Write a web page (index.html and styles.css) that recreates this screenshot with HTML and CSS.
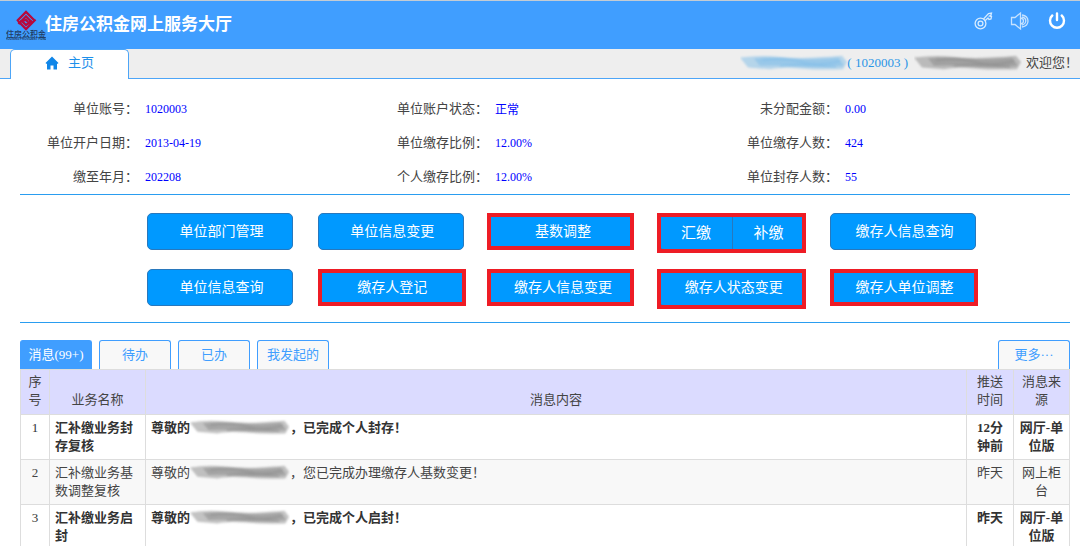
FILE: index.html
```html
<!DOCTYPE html>
<html lang="zh-CN">
<head>
<meta charset="utf-8">
<title>住房公积金网上服务大厅</title>
<link rel="stylesheet" href="styles.css">
</head>
<body>
<svg class="defs" width="0" height="0" aria-hidden="true">
  <defs>
    <filter id="soft" x="-10%" y="-30%" width="120%" height="160%"><feGaussianBlur stdDeviation="1.2"/></filter>
    <symbol id="smudge" viewBox="0 0 108 20" preserveAspectRatio="none">
      <g filter="url(#soft)" fill="currentColor">
        <path opacity=".5" d="M0 4 Q20 1 38 3 T74 4 T102 2 L107 9 L103 17 Q80 18 60 16 T30 17 L8 15 Z"/>
        <path opacity=".5" d="M14 5 Q34 3 52 5 T98 4 L104 13 Q80 16 60 14 T20 13 Z"/>
      </g>
      <g filter="url(#soft)" fill="none" stroke="currentColor" stroke-width="2" opacity=".5">
        <path d="M22 7 Q45 4 62 9 T100 8M40 13 Q60 10 96 14"/>
      </g>
    </symbol>
  </defs>
</svg>

<header class="header">
  <div class="brand">
    <svg class="brand-logo" viewBox="0 0 40 32" role="img" aria-label="住房公积金">
      <g fill="none" stroke="#b8083c" stroke-width="2.300">
        <path d="M11 12 L20 3 L28 11"/>
        <path d="M12.500 15 L20 7.500 L24.500 12 L22.500 14"/>
        <path d="M29.500 10.500 L20 20 L12 12"/>
        <path d="M26 12 L20 16 L16 12 L20 11 L22 13"/>
      </g>
      <text class="logo-name" x="20" y="28" text-anchor="middle">住房公积金</text>
      <text class="logo-sub" x="20" y="31" text-anchor="middle">HOUSING PROVIDENT FUND</text>
    </svg>
    <h1 class="brand-title">住房公积金网上服务大厅</h1>
  </div>
  <div class="tools">
    <button class="tool" type="button" aria-label="修改密码">
      <svg viewBox="0 0 20 20" fill="none" stroke="#d6ebff" stroke-width="1.300">
        <circle cx="7.500" cy="12.500" r="5.400"/><circle cx="7.500" cy="12.500" r="2.400"/>
        <path d="M10.500 8 L15.500 2.500 L18.500 2 L18 4 L16.500 5 L18.500 5.500 L18 8 L16 8.500 L15 7 L12 9.800"/>
      </svg>
    </button>
    <button class="tool" type="button" aria-label="声音">
      <svg viewBox="0 0 20 20" fill="none" stroke="#c6e2ff" stroke-width="1.300">
        <path d="M1.500 6.500 H5 L10.500 2 V18 L5 13.500 H1.500 Z"/>
        <path d="M10.500 7 Q13.500 7.500 13.500 10 T10.500 13"/><path d="M12 4 Q18 5 18 10 T12 16"/><path d="M12 6 Q16 7 15.800 10 T12 14"/>
      </svg>
    </button>
    <button class="tool" type="button" aria-label="退出">
      <svg viewBox="0 0 20 20" fill="none" stroke="#fff" stroke-width="2.400" stroke-linecap="round">
        <path d="M10 2.500 V9M5.300 4.500 A7 7 0 1 0 14.700 4.500"/>
      </svg>
    </button>
  </div>
</header>

<nav class="navbar">
  <a class="home-tab" href="#">
    <svg class="home-icon" viewBox="0 0 14 14" fill="#1086e8"><path d="M7 .5 L13.500 7 L12.800 7.800 H12 V13.500 H8.500 V9.500 H5.500 V13.500 H2 V7.800 H1.200 L.5 7 Z"/></svg>
    <span>主页</span>
  </a>
  <div class="welcome">
    <svg class="smudge smudge-blue" aria-hidden="true"><use href="#smudge"/></svg>
    <span class="unit-id">( 1020003 )</span>
    <svg class="smudge smudge-user" aria-hidden="true"><use href="#smudge"/></svg>
    <span>欢迎您！</span>
  </div>
</nav>

<main class="content">
  <dl class="info">
    <div class="info-item"><dt>单位账号：</dt><dd>1020003</dd></div>
    <div class="info-item"><dt>单位账户状态：</dt><dd class="status">正常</dd></div>
    <div class="info-item"><dt>未分配金额：</dt><dd>0.00</dd></div>
    <div class="info-item"><dt>单位开户日期：</dt><dd>2013-04-19</dd></div>
    <div class="info-item"><dt>单位缴存比例：</dt><dd>12.00%</dd></div>
    <div class="info-item"><dt>单位缴存人数：</dt><dd>424</dd></div>
    <div class="info-item"><dt>缴至年月：</dt><dd>202208</dd></div>
    <div class="info-item"><dt>个人缴存比例：</dt><dd>12.00%</dd></div>
    <div class="info-item"><dt>单位封存人数：</dt><dd>55</dd></div>
  </dl>

  <section class="actions">
    <div class="action"><button type="button">单位部门管理</button></div>
    <div class="action"><button type="button">单位信息变更</button></div>
    <div class="action mark"><button type="button">基数调整</button></div>
    <div class="action split mark mark-tall"><button type="button">汇缴</button><button type="button">补缴</button></div>
    <div class="action"><button type="button">缴存人信息查询</button></div>
    <div class="action"><button type="button">单位信息查询</button></div>
    <div class="action mark mark-right"><button type="button">缴存人登记</button></div>
    <div class="action mark"><button type="button">缴存人信息变更</button></div>
    <div class="action mark mark-tall"><button type="button">缴存人状态变更</button></div>
    <div class="action mark mark-right"><button type="button">缴存人单位调整</button></div>
  </section>

  <section class="messages">
    <div class="tabs">
      <button class="tab tab-active" type="button">消息(99+)</button>
      <button class="tab" type="button">待办</button>
      <button class="tab" type="button">已办</button>
      <button class="tab" type="button">我发起的</button>
      <a class="tab tab-more" href="#">更多···</a>
    </div>
    <table class="list">
      <colgroup><col class="col-no"><col class="col-name"><col><col class="col-time"><col class="col-source"></colgroup>
      <thead>
        <tr><th>序号</th><th>业务名称</th><th>消息内容</th><th>推送时间</th><th>消息来源</th></tr>
      </thead>
      <tbody>
        <tr class="unread">
          <td class="no">1</td><td>汇补缴业务封存复核</td>
          <td>尊敬的<svg class="smudge smudge-row" aria-hidden="true"><use href="#smudge"/></svg>，已完成个人封存！</td>
          <td class="mid">12分钟前</td><td class="mid">网厅-单位版</td>
        </tr>
        <tr class="read">
          <td class="no">2</td><td>汇补缴业务基数调整复核</td>
          <td>尊敬的<svg class="smudge smudge-row" aria-hidden="true"><use href="#smudge"/></svg>，您已完成办理缴存人基数变更！</td>
          <td class="mid">昨天</td><td class="mid">网上柜台</td>
        </tr>
        <tr class="unread">
          <td class="no">3</td><td>汇补缴业务启封</td>
          <td>尊敬的<svg class="smudge smudge-row" aria-hidden="true"><use href="#smudge"/></svg>，已完成个人启封！</td>
          <td class="mid">昨天</td><td class="mid">网厅-单位版</td>
        </tr>
      </tbody>
    </table>
  </section>
</main>
</body>
</html>
```

FILE: styles.css
```css
* {
  box-sizing: border-box;
}

html {
  scrollbar-width: none;
}

body {
  margin: 0;
  background: #fff;
  color: #444;
  font-family: "Liberation Serif", "Noto Sans CJK SC", serif;
  font-size: 13px;
  line-height: 18px;
}

button {
  font-family: inherit;
  cursor: pointer;
}

a {
  text-decoration: none;
}

.defs {
  position: absolute;
}

.header {
  display: flex;
  justify-content: space-between;
  height: 49px;
  padding: 0 13px 0 6px;
  border-top: 1px solid #c4ccd4;
  background: #409eff;
}

.brand {
  display: flex;
  align-items: center;
}

.brand-logo {
  width: 40px;
  height: 32px;
}

.logo-name {
  fill: #1f3a5f;
  font: 500 8px "Noto Sans CJK SC", sans-serif;
}

.logo-sub {
  fill: #1f3a5f;
  font: bold 3px "Liberation Sans", sans-serif;
}

.brand-title {
  margin: 0 0 0 -1px;
  padding-bottom: 4px;
  color: #fff;
  font: bold 17px/24px "Noto Sans CJK SC", sans-serif;
}

.tools {
  display: flex;
  gap: 17px;
  padding-top: 10px;
}

.tool {
  width: 20px;
  height: 20px;
  padding: 0;
  border: 0;
  background: none;
}

.tool svg {
  display: block;
  width: 20px;
  height: 20px;
}

.navbar {
  display: flex;
  justify-content: space-between;
  height: 30px;
  padding-left: 10px;
  border-bottom: 1px solid #4da5f7;
  background: #eee;
}

.home-tab {
  display: flex;
  align-items: center;
  justify-content: center;
  gap: 9px;
  width: 119px;
  height: 30px;
  padding-bottom: 3px;
  border: 1px solid #4da5f7;
  border-bottom: 0;
  border-radius: 5px 5px 0 0;
  background: #fff;
  color: #1e90ea;
}

.home-icon {
  width: 14px;
  height: 14px;
}

.welcome {
  display: flex;
  align-items: center;
  padding: 0 2px 2px 0;
}

.smudge {
  width: 108px;
  height: 18px;
  color: #888;
}

.smudge-blue {
  color: #7dbbe8;
}

.smudge-user {
  margin: 0 4px 0 6px;
}

.unit-id {
  margin-left: -1px;
  color: #2a95e6;
}

.content {
  padding: 13px 10px 0 20px;
}

.info {
  display: grid;
  grid-template-columns: repeat(3, 1fr);
  margin: 0;
  border-bottom: 1px solid #2a9df0;
}

.info-item {
  display: grid;
  grid-template-columns: 118px 1fr;
  gap: 7px;
  line-height: 34px;
}

.info dt {
  text-align: right;
}

.info dd {
  margin: 0;
  color: #00f;
  font-size: 12px;
}

.info .status {
  padding-top: 2px;
  line-height: 32px;
}

.actions {
  display: grid;
  grid-template-columns: repeat(5, 1fr);
  gap: 19px 25px;
  padding: 18px 94px 16px 127px;
  border-bottom: 1px solid #2a9df0;
}

.action {
  position: relative;
  display: flex;
  height: 37px;
}

.action button {
  flex: 1;
  padding: 0 0 3px 3px;
  border: 1px solid #2878bd;
  border-radius: 5px;
  background: #09f;
  color: #fff;
  font-size: 14px;
}

.action.split button {
  padding: 0;
  font-size: 15px;
}

.split button:first-child {
  border-right: 0;
  border-radius: 5px 0 0 5px;
}

.split button:last-child {
  border-radius: 0 5px 5px 0;
}

.mark::after {
  content: "";
  position: absolute;
  inset: 0 0 0 -2px;
  border: 4px solid #ee1c25;
  pointer-events: none;
}

.mark-tall::after {
  right: -1px;
  bottom: -3px;
}

.mark-right::after {
  right: -2px;
  left: 0;
}

.messages {
  padding-top: 17px;
}

.tabs {
  display: flex;
  gap: 7px;
}

.tab {
  width: 72px;
  height: 29px;
  padding: 0;
  border: 1px solid #409eff;
  border-bottom: 0;
  border-radius: 3px 3px 0 0;
  background: #f8f8f8;
  color: #409eff;
  font-size: 13px;
  line-height: 28px;
  text-align: center;
}

.tab-active {
  background: #409eff;
  color: #fff;
}

.tab-more {
  margin-left: auto;
}

.list {
  width: 100%;
  border-collapse: collapse;
  table-layout: fixed;
}

.col-no {
  width: 29px;
}

.col-name {
  width: 96px;
}

.col-time {
  width: 47px;
}

.col-source {
  width: 56px;
}

.list th,
.list td {
  padding: 4px 5px;
  border: 1px solid #ddd;
  vertical-align: top;
}

.list th {
  padding: 3px 5px 5px;
  background: #dbdbff;
  font-weight: normal;
  text-align: center;
  vertical-align: bottom;
}

.list .no {
  font-weight: normal;
  text-align: center;
}

.list .mid {
  text-align: center;
}

.unread {
  color: #333;
  font-weight: bold;
}

.read {
  background: #f8f8f8;
}

.smudge-row {
  width: 100px;
  height: 17px;
  vertical-align: top;
}
```
